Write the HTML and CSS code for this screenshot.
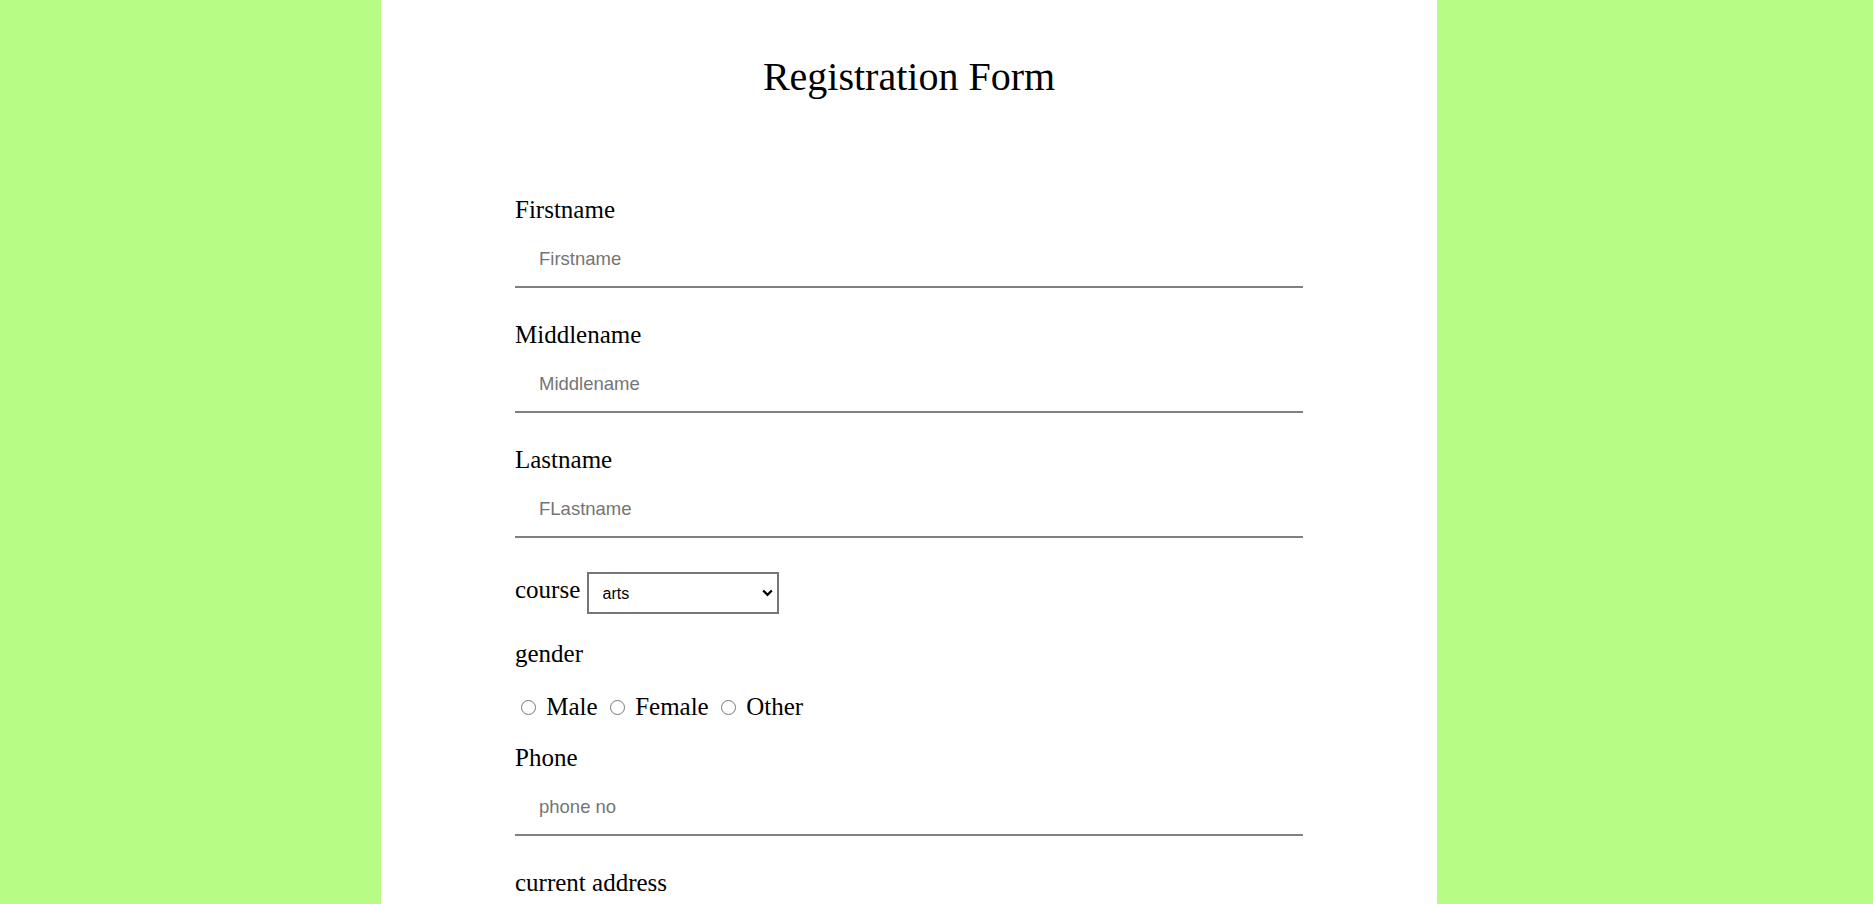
FILE: index.html
```html
<!DOCTYPE html>
<html lang="en">
<head>
<meta charset="utf-8">
<title>Registration Form</title>
<link rel="stylesheet" href="styles.css">
</head>
<body>
<main class="panel">
  <h1 class="title">Registration Form</h1>
  <form class="form">
    <div class="field">
      <label class="label" for="fn">Firstname</label>
      <input class="input" id="fn" type="text" placeholder="Firstname">
    </div>
    <div class="field">
      <label class="label" for="mn">Middlename</label>
      <input class="input" id="mn" type="text" placeholder="Middlename">
    </div>
    <div class="field">
      <label class="label" for="ln">Lastname</label>
      <input class="input" id="ln" type="text" placeholder="FLastname">
    </div>
    <div class="course-row">
      <label for="course">course</label>
      <span class="select-wrap">
        <select class="select" id="course">
          <option>arts</option>
          <option>science</option>
          <option>commerce</option>
        </select>
        <svg class="chevron" width="11" height="8" viewBox="0 0 11 8" aria-hidden="true"><polyline points="1.2,1.5 5.5,5.8 9.8,1.5" fill="none" stroke="#000" stroke-width="2.3"/></svg>
      </span>
    </div>
    <div class="label gender">gender</div>
    <div class="radios"><input class="radio" type="radio" name="g" id="m"> <label for="m">Male</label> <input class="radio" type="radio" name="g" id="f"> <label for="f">Female</label> <input class="radio" type="radio" name="g" id="o"> <label for="o">Other</label></div>
    <div class="field">
      <label class="label" for="ph">Phone</label>
      <input class="input" id="ph" type="text" placeholder="phone no">
    </div>
    <div class="label">current address</div>
  </form>
</main>
</body>
</html>
```

FILE: styles.css
```css
html, body {
  margin: 0;
  height: 100%;
  overflow: hidden;
}
body {
  background: #b6fc85;
  font-family: "Liberation Serif", "Times New Roman", serif;
  color: #000;
}
.panel {
  margin-left: 381px;
  width: 1056px;
  height: 100vh;
  background: #fff;
  padding-top: 54px;
  box-sizing: border-box;
}
.title {
  margin: 0;
  text-align: center;
  font-size: 40px;
  font-weight: normal;
  line-height: 46px;
}
.form {
  width: 788px;
  margin: 96px auto 0;
  display: flex;
  flex-direction: column;
}
.field {
  display: flex;
  flex-direction: column;
  margin-bottom: 33px;
}
.label {
  font-size: 25px;
  line-height: 28px;
}
.input {
  margin: 8px 0 0;
  height: 56px;
  box-sizing: border-box;
  padding: 0 24px;
  border: none;
  border-bottom: 2px solid #808080;
  font: 18.5px "Liberation Sans", Arial, sans-serif;
  outline: none;
  background: transparent;
}
.input::placeholder {
  color: #757575;
}
.course-row {
  font-size: 25px;
  line-height: 28px;
  margin-bottom: 27px;
}
.select-wrap {
  position: relative;
  display: inline-block;
  top: 1px;
}
.select {
  -webkit-appearance: none;
  appearance: none;
  width: 192px;
  height: 42px;
  box-sizing: border-box;
  border: 2px solid #767676;
  border-radius: 0;
  background: #fff;
  color: #000;
  padding: 0 24px 0 14px;
  margin: 0;
  font: 16px "Liberation Sans", Arial, sans-serif;
  vertical-align: baseline;
}
.chevron {
  position: absolute;
  right: 6px;
  top: 17px;
  pointer-events: none;
}
.gender {
  margin-bottom: 25px;
}
.radios {
  font-size: 25px;
  line-height: 28px;
  margin-bottom: 23px;
}
.radio {
  width: 15px;
  height: 15px;
  margin: 3px 4px 0 6px;
}
```
